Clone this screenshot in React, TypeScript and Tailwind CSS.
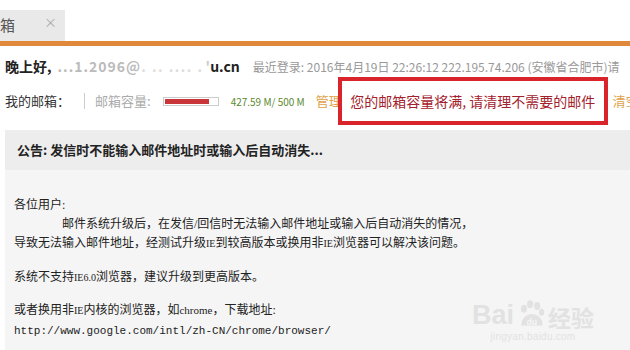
const cjk = { fontFamily: '"Noto Sans CJK SC", "Noto Sans", sans-serif' };
const song = { fontFamily: '"Liberation Serif", "Noto Sans CJK SC", serif' };

const BaiduMark = () => (
    <div className="absolute right-[36px] bottom-[16px] flex flex-col items-center text-[#e2e2e2] select-none">
        <div className="flex items-end gap-[2px] leading-none">
            <span className="text-[27px] font-bold" style={{ fontFamily: '"Liberation Sans", sans-serif' }}>Bai</span>
            <svg width="30" height="30" viewBox="0 0 34 34" fill="#e2e2e2">
                <ellipse cx="9" cy="11" rx="3.5" ry="4.5" />
                <ellipse cx="16" cy="6" rx="3.5" ry="4.5" />
                <ellipse cx="24" cy="8" rx="3.5" ry="4.5" />
                <ellipse cx="29" cy="15" rx="3" ry="4" />
                <path d="M6 30 C6 22 12 17 18 17 C25 17 31 23 30 30 Z" />
                <text x="18" y="29" fontSize="10" fill="#f5f5f5" textAnchor="middle" fontFamily="Liberation Sans" fontWeight="bold">du</text>
            </svg>
            <span className="text-[23px] font-bold" style={cjk}>经验</span>
        </div>
        <span className="text-[10px] tracking-wide" style={{ fontFamily: '"Liberation Sans", sans-serif' }}>jingyan.baidu.com</span>
    </div>
);

export default function App() {
    return (
        <div className="w-[630px] h-[350px] bg-white overflow-hidden" style={cjk}>
            {/* tab strip */}
            <div className="h-[41px] pt-[10px] flex">
                <div className="w-[65px] h-[31px] bg-[#e9e9e9] flex items-center justify-between pr-[8px]">
                    <span className="text-[15px] text-[#555]">箱</span>
                    <span className="text-[13px] text-[#aaa] -mt-[8px]">×</span>
                </div>
            </div>
            <div className="h-[5px] bg-[#e0893a]" />

            {/* greeting */}
            <div className="h-[35px] flex items-end pl-[5px] pb-[4px] whitespace-nowrap *:shrink-0">
                <span className="text-[14px] font-bold text-[#222]">晚上好,</span>
                <span className="text-[14px] font-bold text-[#bbb] ml-[6px] tracking-[1px]">...1.2096@</span>
                <span className="text-[14px] font-bold text-[#ddd] tracking-[1.5px]">. .. .... .</span>
                <span className="text-[14px] font-bold text-[#ccc] ml-[2px]">'</span>
                <span className="text-[14px] font-bold text-[#222]">u.cn</span>
                <span className="text-[12px] text-[#999] ml-[13px] mb-[1px]">最近登录: 2016年4月19日 22:26:12 222.195.74.206 (安徽省合肥市)请</span>
            </div>

            {/* mailbox row */}
            <div className="h-[40px] flex items-center pl-[5px] whitespace-nowrap *:shrink-0">
                <span className="text-[13px] text-[#333]">我的邮箱：</span>
                <span className="w-px h-[16px] bg-[#ccc] ml-[14px]" />
                <span className="text-[13px] text-[#aaa] ml-[10px]">邮箱容量:</span>
                <div className="ml-[12px] w-[56px] h-[9px] border border-[#ccc] bg-white p-px">
                    <div className="h-full bg-[#c9363a]" style={{ width: '86%' }} />
                </div>
                <span className="text-[10px] text-[#5b8a2e] ml-[12px]">427.59 M/ 500 M</span>
                <span className="text-[13px] text-[#e0a24a] ml-[11px]">管理</span>
                <div className="ml-[-4px] w-[270px] h-[48px] border-[4px] border-[#d9242b] bg-white flex items-center justify-center">
                    <span className="text-[14px] text-[#a3212c]">您的邮箱容量将满, 请清理不需要的邮件</span>
                </div>
                <span className="text-[13px] text-[#e0a24a] ml-[5px]">清空</span>
            </div>

            {/* announcement */}
            <div className="ml-[5px] mt-[9px] h-[230px] bg-[#f5f5f5] relative">
                <div className="h-[40px] bg-[#ededed] flex items-center pl-[12px]">
                    <span className="text-[13px] font-bold text-[#222]">公告: 发信时不能输入邮件地址时或输入后自动消失...</span>
                </div>
                <div className="pl-[9px] pt-[26px] text-[12px] leading-[19px] text-[#222]" style={song}>
                    <p>各位用户:</p>
                    <p className="pl-[48px]">邮件系统升级后，在发信/回信时无法输入邮件地址或输入后自动消失的情况，</p>
                    <p>导致无法输入邮件地址，经测试升级<span className="text-[10px]">IE</span>到较高版本或换用非<span className="text-[10px]">IE</span>浏览器可以解决该问题。</p>
                    <p className="mt-[15px]">系统不支持<span className="text-[10px]">IE6.0</span>浏览器，建议升级到更高版本。</p>
                    <p className="mt-[14px]">或者换用非<span className="text-[10px]">IE</span>内核的浏览器，如<span className="text-[11px]">chrome</span>，下载地址:</p>
                    <p className="text-[11px] leading-[16px] mt-[3px]" style={{ fontFamily: '"Liberation Mono", monospace' }}>http://www.google.com/intl/zh-CN/chrome/browser/</p>
                </div>
                <BaiduMark />
            </div>
        </div>
    );
}
